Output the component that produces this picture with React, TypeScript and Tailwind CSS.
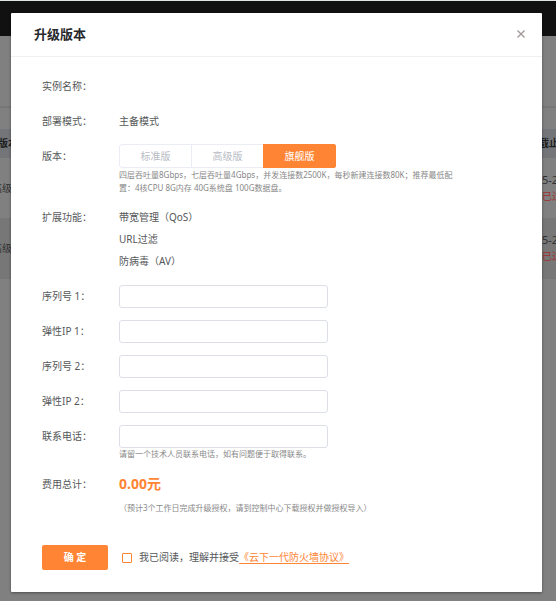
import { useState, type ReactNode } from "react";

const editions = ["标准版", "高级版", "旗舰版"];
const fields = ["序列号 1", "弹性IP 1", "序列号 2", "弹性IP 2"];
const inputClass =
  "block h-[23px] w-[209px] rounded-[3px] border border-[#dcdfe6] bg-white px-2 text-[10px] text-[#606266] outline-none focus:border-[#ff8534]";

function Row({ label, htmlFor, children }: { label: string; htmlFor?: string; children?: ReactNode }) {
  return (
    <div className="flex">
      <label htmlFor={htmlFor} className="w-[77px] shrink-0 leading-6">
        {label}：
      </label>
      <div className="min-w-0 flex-1">{children}</div>
    </div>
  );
}

function Page() {
  return (
    <div className="col-start-1 row-start-1 min-w-0 overflow-hidden border-t border-[#dfe5e2] bg-[#808080] text-[10px] text-[#303133]">
      <div className="h-[35px] bg-[#111111]" />
      <div className="h-[72px] border-b-2 border-[#777777]" />
      <div className="mt-[21px] flex h-[29px] items-center justify-between bg-[#737578] font-bold text-[#1c1d20]">
        <span className="-ml-0.5">版本</span>
        <span className="w-[17px] whitespace-nowrap">截止日期</span>
      </div>
      <div className="flex h-[60px] items-center justify-between">
        <span className="-ml-2">高级</span>
        <div className="w-[14px] whitespace-nowrap leading-4">
          <p className="text-[11px]">5-2</p>
          <p className="text-[#a03030]">已过期</p>
        </div>
      </div>
      <div className="flex h-[61px] items-center justify-between border-b border-[#737578] bg-[#777777]">
        <span className="-ml-2">高级</span>
        <div className="w-[14px] whitespace-nowrap leading-4">
          <p className="text-[11px]">5-2</p>
          <p className="text-[#a03030]">已过期</p>
        </div>
      </div>
    </div>
  );
}

export default function App() {
  const [edition, setEdition] = useState("旗舰版");
  return (
    <div className="grid min-h-screen grid-cols-1 font-['Noto_Sans','Noto_Sans_CJK_SC',sans-serif]">
      <Page />
      <section
        role="dialog"
        aria-labelledby="title"
        className="z-10 col-start-1 row-start-1 mt-[13px] mr-[14px] mb-[9px] ml-[11px] self-start rounded-[1px] bg-white text-[10px] text-[#555759] shadow-[0_1px_3px_rgba(0,0,0,0.4)]"
      >
        <header className="flex h-11 items-center justify-between border-b border-[#f0f0f0] pr-4 pb-0.5 pl-[23px]">
          <h1 id="title" className="pt-0.5 text-[13px] font-bold text-[#26282c]">
            升级版本
          </h1>
          <button type="button" aria-label="关闭" className="p-px text-[#a09a98]">
            <svg className="size-2" viewBox="0 0 8 8" fill="none" stroke="currentColor" strokeWidth="1.4">
              <path d="M.5.5l7 7M7.5.5l-7 7" />
            </svg>
          </button>
        </header>
        <form className="flex flex-col gap-[11px] pt-[17px] pb-[22px] pl-[31px]">
          <Row label="实例名称" />
          <Row label="部署模式">
            <p className="leading-6">主备模式</p>
          </Row>
          <Row label="版本">
            <div className="flex h-6 w-[217px] overflow-hidden rounded-[3px]">
              {editions.map((name) => (
                <button
                  key={name}
                  type="button"
                  aria-pressed={edition === name}
                  onClick={() => setEdition(name)}
                  className={
                    edition === name
                      ? "flex-1 border border-[#ff8534] bg-[#ff8534] text-white"
                      : "flex-1 border border-r-0 border-[#ebedf4] text-[#b8bcc4] first:rounded-l-[3px]"
                  }
                >
                  {name}
                </button>
              ))}
            </div>
            <p className="text-[8px] leading-[13px] text-[#888888]">
              四层吞吐量8Gbps，七层吞吐量4Gbps，并发连接数2500K，每秒新建连接数80K；推荐最低配
              <br />
              置：4核CPU 8G内存 40G系统盘 100G数据盘。
            </p>
          </Row>
          <Row label="扩展功能">
            <ul className="py-px leading-[22px]">
              <li>带宽管理（QoS）</li>
              <li>URL过滤</li>
              <li>防病毒（AV）</li>
            </ul>
          </Row>
          {fields.map((name) => (
            <Row key={name} label={name} htmlFor={name}>
              <input id={name} type="text" className={`mt-px ${inputClass}`} />
            </Row>
          ))}
          <Row label="联系电话" htmlFor="phone">
            <input id="phone" type="tel" className={`mt-px ${inputClass}`} />
            <p className="pb-0.5 text-[8px] leading-[11px] text-[#888888]">
              请留一个技术人员联系电话，如有问题便于取得联系。
            </p>
          </Row>
          <Row label="费用总计">
            <p className="text-[14px] leading-6 font-bold text-[#ff8534]">0.00元</p>
            <p className="text-[8px] leading-6 text-[#888888]">
              （预计3个工作日完成升级授权，请到控制中心下载授权并做授权导入）
            </p>
          </Row>
          <div className="mt-[14px] flex items-center">
            <button type="submit" className="h-[25px] w-[66px] rounded-[2px] bg-[#ff8534] font-bold text-white">
              确 定
            </button>
            <input
              id="agree"
              type="checkbox"
              className="mr-[7px] ml-[14px] size-[10px] appearance-none rounded-[1px] border border-[#ff8534] bg-white checked:bg-[#ff8534]"
            />
            <label htmlFor="agree">我已阅读，理解并接受</label>
            <a href="#agreement" className="text-[#ff8534] underline underline-offset-2">
              《云下一代防火墙协议》
            </a>
          </div>
        </form>
      </section>
    </div>
  );
}
